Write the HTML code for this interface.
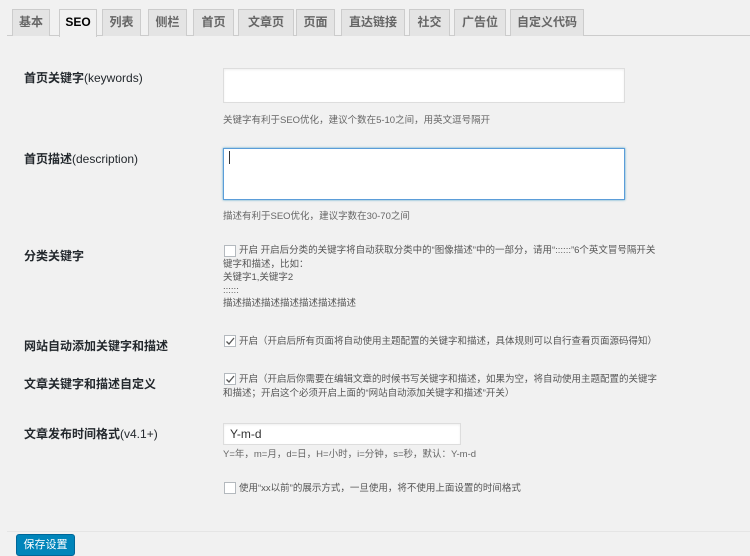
<!DOCTYPE html>
<html><head><meta charset="utf-8"><style>
*{margin:0;padding:0;box-sizing:border-box}
body{width:750px;height:552px;background:#f1f1f1;font-family:"Liberation Sans","Noto Sans CJK SC",sans-serif;color:#444;position:relative;overflow:hidden}
.a{position:absolute;white-space:nowrap}
.tab{position:absolute;top:9px;height:27px;background:#e4e4e4;border:1px solid #ccc;border-bottom:none;font-size:12px;font-weight:bold;color:#666;text-align:center;line-height:25px}
.tab.on{background:#f1f1f1;color:#000;height:28px}
.lbl{font-size:12px;font-weight:bold;color:#23282d}
.help{font-size:9.5px;color:#666}
.inp{position:absolute;background:#fff;border:1px solid #ddd;box-shadow:inset 0 1px 2px rgba(0,0,0,.07)}
.cb{position:absolute;width:12px;height:12px;background:#fff;border:1px solid #b4b9be}
.t{font-size:9.5px;color:#555;line-height:13px}
</style></head><body>
<div class="a" style="left:7px;top:35px;width:743px;height:1px;background:#ccc"></div>
<div class="tab" style="left:12px;width:38px">基本</div>
<div class="tab on" style="left:59px;width:38px">SEO</div>
<div class="tab" style="left:102px;width:39px">列表</div>
<div class="tab" style="left:148px;width:39px">侧栏</div>
<div class="tab" style="left:193px;width:41px">首页</div>
<div class="tab" style="left:238px;width:56px">文章页</div>
<div class="tab" style="left:296px;width:39px">页面</div>
<div class="tab" style="left:341px;width:64px">直达链接</div>
<div class="tab" style="left:409px;width:41px">社交</div>
<div class="tab" style="left:454px;width:52px">广告位</div>
<div class="tab" style="left:510px;width:74px">自定义代码</div>

<div class="a lbl" style="left:24px;top:69px">首页关键字<span style="font-weight:normal">(keywords)</span></div>
<div class="inp" style="left:223px;top:68px;width:402px;height:35px"></div>
<div class="a help" style="left:223px;top:112px">关键字有利于SEO优化，建议个数在5-10之间，用英文逗号隔开</div>

<div class="a lbl" style="left:24px;top:150px">首页描述<span style="font-weight:normal">(description)</span></div>
<div class="inp" style="left:223px;top:148px;width:402px;height:52px;border-color:#5b9dd9;box-shadow:0 0 2px rgba(30,140,190,.8)"></div>
<div class="a" style="left:229px;top:151px;width:1px;height:13px;background:#333"></div>
<div class="a help" style="left:223px;top:208px">描述有利于SEO优化，建议字数在30-70之间</div>

<div class="a lbl" style="left:24px;top:247px">分类关键字</div>
<div class="cb" style="left:224px;top:245px"></div>
<div class="a t" style="left:239px;top:244px">开启 开启后分类的关键字将自动获取分类中的“图像描述”中的一部分，请用“::::::”6个英文冒号隔开关</div>
<div class="a t" style="left:223px;top:258px">键字和描述，比如：<br>关键字1,关键字2<br>::::::<br>描述描述描述描述描述描述描述</div>

<div class="a lbl" style="left:24px;top:337px">网站自动添加关键字和描述</div>
<div class="cb" style="left:224px;top:335px"><svg width="12" height="12" viewBox="0 0 12 12" style="position:absolute;left:-1px;top:-1px"><path d="M2.5 6.5L5 9L10 3" stroke="#555" stroke-width="1.3" fill="none"/></svg></div>
<div class="a t" style="left:239px;top:335px">开启（开启后所有页面将自动使用主题配置的关键字和描述，具体规则可以自行查看页面源码得知）</div>

<div class="a lbl" style="left:24px;top:375px">文章关键字和描述自定义</div>
<div class="cb" style="left:224px;top:373px"><svg width="12" height="12" viewBox="0 0 12 12" style="position:absolute;left:-1px;top:-1px"><path d="M2.5 6.5L5 9L10 3" stroke="#555" stroke-width="1.3" fill="none"/></svg></div>
<div class="a t" style="left:239px;top:373px">开启（开启后你需要在编辑文章的时候书写关键字和描述，如果为空，将自动使用主题配置的关键字</div>
<div class="a t" style="left:223px;top:387px">和描述；开启这个必须开启上面的“网站自动添加关键字和描述”开关）</div>

<div class="a lbl" style="left:24px;top:425px">文章发布时间格式<span style="font-weight:normal">(v4.1+)</span></div>
<div class="inp" style="left:223px;top:423px;width:238px;height:22px"></div>
<div class="a" style="left:230px;top:427px;font-size:12px;color:#333">Y-m-d</div>
<div class="a help" style="left:223px;top:446px">Y=年，m=月，d=日，H=小时，i=分钟，s=秒，默认：Y-m-d</div>
<div class="cb" style="left:224px;top:482px"></div>
<div class="a t" style="left:239px;top:482px">使用“xx以前”的展示方式，一旦使用，将不使用上面设置的时间格式</div>

<div class="a" style="left:7px;top:531px;width:743px;height:1px;background:#e5e5e5"></div>
<div class="a" style="left:16px;top:534px;width:59px;height:22px;background:#0085ba;border:1px solid #006799;border-radius:3px;color:#fff;font-size:11px;text-align:center;line-height:20px">保存设置</div>
</body></html>
